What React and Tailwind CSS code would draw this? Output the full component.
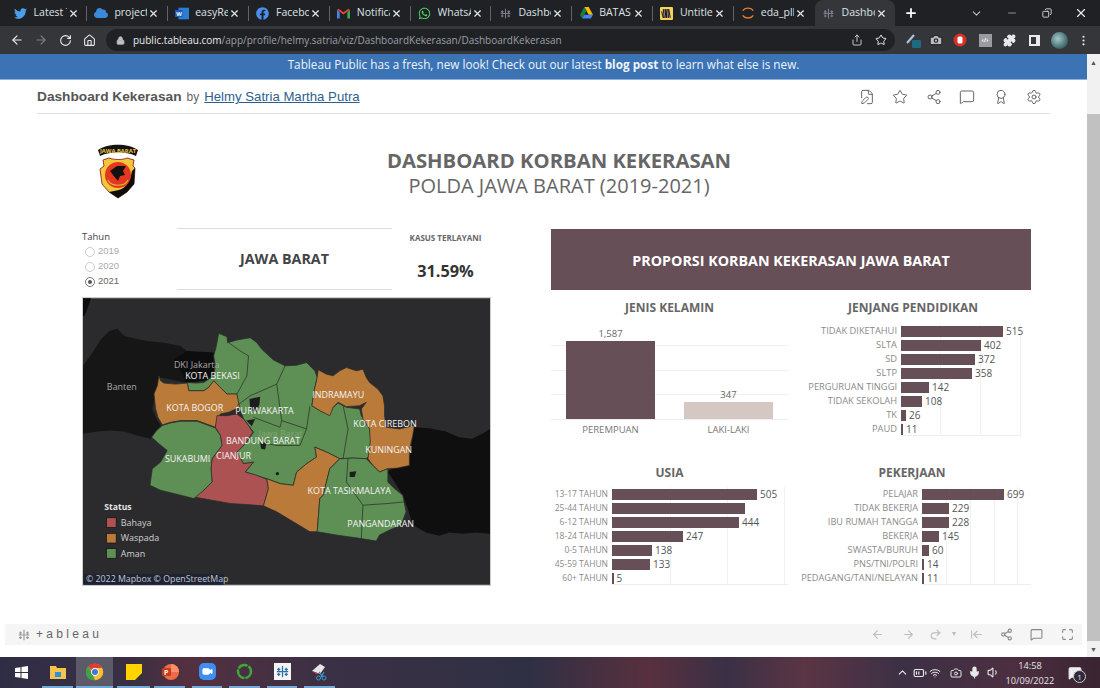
import React from "react";
import { ArrowLeft, ArrowRight, RotateCw, Home, Lock, Share, Star, Camera, Puzzle, X, Plus, ChevronDown, Minus, Copy, MoreVertical, ChevronUp, Share2, MessageSquare, Award, Settings, FileEdit, Mic, Volume1, Wifi, BatteryMedium, MessageSquareText, Undo2, ArrowLeftToLine, Maximize, Video } from "lucide-react";
import { FaTwitter, FaFacebook, FaWhatsapp, FaCloud } from "react-icons/fa";

const T = ({ s = 14, c = "#7a7f8c" }) => (
  <svg width={s} height={s} viewBox="0 0 24 24" stroke={c} strokeWidth="2" fill="none">
    <path d="M12 3v18M3 12h18M6 6v5M3.500 8.500h5M18 6v5M15.500 8.500h5M6 14v5M3.500 16.500h5M18 14v5M15.500 16.500h5" />
  </svg>
);
const Tab = ({ icon, label, active, divider = true }) => (
  <div className={`w-[80.8px] h-[26px] flex items-center shrink-0 relative ${active ? "bg-[#35363a] rounded-t-lg" : ""}`}>
    <span className="w-[16px] ml-[6px] flex justify-center shrink-0">{icon}</span>
    <span className="ml-[5px] w-[33px] overflow-hidden whitespace-nowrap text-[10.500px] text-[#dfe1e5]">{label}</span>
    <X size={11} color="#e8eaed" strokeWidth={2.5} className="ml-[1px]" />
    {divider && <span className="absolute right-0 top-[6px] h-[15px] w-px bg-[#5f6368]" />}
  </div>
);
const Gmail = () => (
  <svg width="13" height="11" viewBox="0 0 24 18">
    <path d="M0 2v16h5V7z" fill="#4285f4" /><path d="M24 2v16h-5V7z" fill="#34a853" />
    <path d="M0 2l12 9 12-9-3-2-9 6.500L3 0z" fill="#ea4335" />
  </svg>
);
const Drive = () => (
  <svg width="13" height="12" viewBox="0 0 24 22">
    <path d="M8 0h8l8 14h-8z" fill="#fbbc04" /><path d="M8 0L0 14l4 7 8-14z" fill="#188038" /><path d="M4 21h16l4-7H8z" fill="#4285f4" />
  </svg>
);
const Word = () => (
  <svg width="14" height="13" viewBox="0 0 24 22">
    <rect x="6" y="1" width="18" height="20" fill="#2b7cd3" /><rect x="0" y="5" width="13" height="12" fill="#185abd" />
    <text x="2" y="15" fontSize="10" fontWeight="700" fill="#fff" fontFamily="Open Sans">W</text>
  </svg>
);
const Miro = () => (
  <svg width="13" height="13" viewBox="0 0 24 24">
    <rect width="24" height="24" rx="2" fill="#f7d34f" />
    <path d="M6 4l2 16M11 4l2 16M16 4l3 16M3 8l3 12M9 4l2 16M14 4l2 16" stroke="#1a1a40" strokeWidth="2" />
  </svg>
);
const Jupyter = () => (
  <svg width="14" height="14" viewBox="0 0 24 24" fill="none" stroke="#e67e32" strokeWidth="2.200">
    <path d="M3 8c4-6 14-6 18 0" /><path d="M3 16c4 6 14 6 18 0" />
  </svg>
);

const tabs = [
  { icon: <FaTwitter size={13} color="#4a9fe8" />, label: "Latest Tw" },
  { icon: <FaCloud size={14} color="#3b8ad9" />, label: "project_" },
  { icon: <Word />, label: "easyRep" },
  { icon: <FaFacebook size={13} color="#4a8ff0" />, label: "Facebook" },
  { icon: <Gmail />, label: "Notificat" },
  { icon: <FaWhatsapp size={13} color="#4fd46a" />, label: "WhatsAp" },
  { icon: <T s={13} />, label: "Dashbo" },
  { icon: <Drive />, label: "BATAS K" },
  { icon: <Miro />, label: "Untitled" },
  { icon: <Jupyter />, label: "eda_plb" },
];

const Poly = ({ c, p }) => <polygon points={p} fill={c} stroke="#2a2d2a" strokeWidth="2.200" strokeLinejoin="round" />;
const green = "#5e8f54";
const orange = "#b97a3a";
const red = "#ad5253";
const labels = [
  ["KOTA BEKASI", 314, 250], ["KOTA BOGOR", 257, 345], ["PURWAKARTA", 465, 355], ["INDRAMAYU", 697, 308],
  ["KOTA CIREBON", 821, 395], ["BANDUNG BARAT", 437, 445], ["CIANJUR", 407, 490], ["SUKABUMI", 253, 500],
  ["KUNINGAN", 857, 472], ["KOTA TASIKMALAYA", 683, 596], ["PANGANDARAN", 803, 695],
];
const lines = [
  "M445 140L480 165L505 180L500 240L470 295",
  "M615 210L590 265L545 285L510 300L470 330",
  "M590 265L605 375L600 395L520 365",
  "M605 375L680 400L690 332",
  "M680 400L660 450L590 450L540 440",
  "M790 330L805 400L790 490",
  "M805 490L800 560L850 630L845 730",
  "M850 630L925 625L975 620",
];
const Map = () => (
  <svg viewBox="6 6 1227 864" className="w-full h-full block" fontFamily="'Open Sans', sans-serif">
    <rect x="6" y="6" width="1227" height="864" fill="#2b2b2d" />
    <polygon points="6,6 30,6 22,30 10,60 6,60" fill="#0c0c0c" />
    <polygon points="6,210 20,190 35,170 60,130 85,105 110,98 130,120 165,128 200,135 250,140 300,150 330,175 400,200 400,250 320,262 240,245 225,290 215,340 228,370 240,390 210,430 170,420 130,408 90,405 50,408 6,415" fill="#161616" />
    <polygon points="280,190 320,165 400,170 400,250 320,262" fill="#0d0d0d" />
    <polygon points="1005,395 1050,398 1100,408 1140,425 1180,430 1210,415 1233,400 1233,716 1190,712 1150,716 1110,712 1080,722 1040,712 1000,690 985,640 970,600 945,560 925,530 990,480" fill="#0f0f0f" />
    <Poly c={green} p="415,112 440,122 442,140 470,132 510,125 530,140 545,160 580,192 615,210 650,208 680,200 705,225 712,245 704,280 696,330 720,345 748,358 760,335 775,322 800,335 840,340 845,360 870,400 875,440 870,480 860,490 820,488 780,490 745,472 705,455 710,485 680,505 650,530 640,570 600,565 560,550 495,530 520,500 490,505 470,470 495,445 520,410 505,390 490,370 475,330 470,295 440,295 420,275 400,255 385,275 370,285 325,285 320,260 345,262 370,260 400,240 405,210 400,180 408,150" />
    <Poly c={orange} p="235,240 240,255 250,262 285,265 320,262 325,285 370,285 385,275 400,255 420,275 440,295 470,295 478,335 445,350 420,355 410,375 405,395 350,375 300,375 270,380 245,388 232,365 225,340 220,295 230,270" />
    <Poly c={red} p="410,360 440,360 470,355 490,370 505,390 518,410 495,445 470,470 490,505 520,500 495,530 530,540 560,552 565,580 550,632 500,628 450,625 395,615 340,605 370,585 395,560 392,520 395,490 425,450 420,420 405,395" />
    <Poly c={green} p="245,390 270,382 300,377 350,377 405,397 420,420 425,450 395,490 392,520 395,560 370,585 340,610 280,595 240,585 208,570 212,540 215,520 240,500 260,465 235,445 213,425 228,405" />
    <Poly c={orange} p="715,222 740,235 760,240 780,225 800,215 830,225 850,220 860,245 870,260 895,280 910,300 915,330 915,360 920,395 960,400 1005,390 1000,420 992,455 990,480 990,510 955,518 925,520 900,530 880,510 865,490 872,440 870,400 850,370 845,340 860,320 840,330 800,333 775,320 760,335 750,360 720,345 696,330 704,280 712,245" />
    <Poly c={orange} p="705,455 745,472 780,490 750,520 730,600 720,610 716,660 712,710 690,710 640,680 590,650 550,632 565,580 560,550 600,565 640,570 650,530 680,505 710,485" />
    <Poly c={green} p="780,490 820,488 860,490 880,510 900,530 925,520 925,560 945,580 970,600 980,650 965,690 930,705 900,720 890,738 840,730 770,720 712,710 716,660 720,610 730,600 750,520" />
    {lines.map((d) => <path key={d} d={d} fill="none" stroke="#2a2d2a" strokeWidth="2.200" />)}
    <polygon points="508,310 540,303 538,325 530,350 510,340" fill="#1d1d1d" />
    <polygon points="498,375 525,370 515,392" fill="#1d1d1d" />
    <polygon points="540,442 560,440 555,462 543,460" fill="#1d1d1d" />
    <polygon points="810,530 830,528 825,545 810,545" fill="#1d1d1d" />
    <circle cx="592" cy="535" r="5" fill="#1d1d1d" />
    <text x="280" y="215" fontSize="27" fill="#a8a8a8">DKI Jakarta</text>
    <text x="78" y="282" fontSize="27" fill="#a8a8a8">Banten</text>
    <text x="535" y="425" fontSize="27" fill="#84a67a">Jawa Barat</text>
    {labels.map(([t, x, y]) => <text key={t} x={x} y={y} fontSize="27" fill="#f4f4f4">{t}</text>)}
    <text x="70" y="646" fontSize="26" fontWeight="700" fill="#e6e6e6">Status</text>
    {[[668, red, "Bahaya"], [715, orange, "Waspada"], [761, green, "Aman"]].map(([y, c, t]) => (
      <g key={t}>
        <rect x="77" y={y} width="29" height="29" fill={c} stroke="#111" strokeWidth="2" />
        <text x="120" y={y + 24} fontSize="27" fill="#d0d0d0">{t}</text>
      </g>
    ))}
    <rect x="8" y="838" width="422" height="32" fill="#1d2335" />
    <text x="15" y="862" fontSize="26.500" fill="#c4c6cc">© 2022 Mapbox  © OpenStreetMap</text>
  </svg>
);

const Logo = () => (
  <svg width="42" height="56" viewBox="0 0 42 56">
    <path d="M1 7C11 0 31 0 41 7L39 13C28 8 14 8 3 13Z" fill="#141414" />
    <text x="21" y="9.500" textAnchor="middle" fontSize="5.800" fontWeight="700" fill="#f0c93a" fontFamily="'Open Sans',sans-serif">JAWA BARAT</text>
    <path d="M6 17L12 15C17 17 26 17 30 15L37 17L36 23L38 25L37 41L30 49L21 55L12 49L5 41L3 26L7 23Z" fill="#f5c53c" stroke="#7a1010" strokeWidth="0.800" />
    <path d="M38 25L37 41L30 49L21 55L12 49L17 48C28 47 33 40 35 28Z" fill="#0c0c0c" />
    <circle cx="21" cy="32" r="13" fill="#e5371f" />
    <path d="M13 28L20 23L29 23L26 28L28 32L23 33L21 38L16 32Z" fill="#111" />
    <path d="M11 37C14 44 28 44 31 37" fill="none" stroke="#d8b53a" strokeWidth="1.200" />
  </svg>
);

const HBars = ({ rows, labelW, plotW, ticks, size }) => (
  <div className="flex flex-col relative">
    {ticks.map((t) => <span key={t} className="absolute top-0 bottom-0 w-px bg-[#f0f0f0]" style={{ left: labelW + 4 + t }} />)}
    <span className="absolute bottom-0 right-0 h-px bg-[#eeeeee]" style={{ left: labelW + 4, width: plotW }} />
    {rows.map(([l, v, w]) => (
      <div key={l} className="h-[14px] flex items-center relative">
        <span className="text-right text-[#8a8a8a] whitespace-nowrap shrink-0" style={{ width: labelW, fontSize: size }}>{l}</span>
        <span className="ml-[4px] h-[11px] bg-[#664f57] shrink-0" style={{ width: w }} />
        {v && <span className="ml-[3px] text-[10px] text-[#555555]">{v}</span>}
      </div>
    ))}
  </div>
);

const Title = ({ children, className = "" }) => (
  <div className={`h-[20px] flex items-center justify-center text-[12px] font-bold text-[#666666] ${className}`}>{children}</div>
);

const Taskbtn = ({ w, active, children }) => (
  <div className={`h-full flex items-center justify-center border-b-2 border-[#76a9d8] shrink-0 ${active ? "bg-[#5c5a68]" : ""}`} style={{ width: w }}>{children}</div>
);

export default function App() {
  return (
    <div className="w-[1100px] h-[688px] flex flex-col overflow-hidden bg-white font-['Open_Sans',sans-serif]">
      {/* tab strip */}
      <div className="h-[26px] bg-[#202124] flex items-center pl-[6.600px] shrink-0">
        {tabs.map((t, i) => <Tab key={i} {...t} divider={i !== 9} />)}
        <Tab icon={<T s={13} />} label="Dashbo" active divider={false} />
        <Plus size={14} color="#fff" strokeWidth={3} className="ml-[9px]" />
        <ChevronDown size={13} color="#bdc1c6" className="ml-[52px]" />
        <Minus size={12} color="#8a8d92" className="ml-[23px]" />
        <Copy size={10} color="#e8eaed" className="ml-[24px] -scale-x-100" />
        <X size={14} color="#e8eaed" className="ml-[22px]" />
      </div>
      {/* toolbar */}
      <div className="h-[28px] bg-[#35363a] flex items-center shrink-0 pl-[10px]">
        <ArrowLeft size={14} color="#e8eaed" />
        <ArrowRight size={14} color="#7b7e83" className="ml-[10px]" />
        <RotateCw size={13} color="#e8eaed" className="ml-[11px]" />
        <Home size={13} color="#e8eaed" className="ml-[11px]" />
        <div className="ml-[10px] w-[789px] h-[22px] rounded-full bg-[#202124] flex items-center pl-[10px]">
          <Lock size={9} color="#bdc1c6" fill="#bdc1c6" />
          <span className="ml-[8px] text-[10px] text-[#e8eaed] whitespace-nowrap">public.tableau.com<span className="text-[#9aa0a6]">/app/profile/helmy.satria/viz/DashboardKekerasan/DashboardKekerasan</span></span>
          <Share size={12} color="#c4c7c5" className="ml-auto" />
          <Star size={12} color="#e8eaed" className="ml-[12px] mr-[8px]" />
        </div>
        <svg width="16" height="16" viewBox="0 0 16 16" className="ml-[10px]"><path d="M2 11L9 3" stroke="#a9c6dc" strokeWidth="2" /><rect x="7" y="8" width="9" height="8" rx="1" fill="#1f6a80" /></svg>
        <Camera size={14} color="#2a2a2a" fill="#b9bbbf" className="ml-[8px]" />
        <svg width="14" height="14" viewBox="0 0 14 14" className="ml-[10px]"><circle cx="7" cy="7" r="6.500" fill="#d93025" /><rect x="4.500" y="3.500" width="5" height="7" rx="1.500" fill="#fff" /></svg>
        <div className="ml-[11.500px] w-[13px] h-[13px] bg-[#9a9ca3] flex items-center justify-center text-[6px] font-bold text-white">‹/›</div>
        <Puzzle size={13} color="#e8eaed" fill="#e8eaed" className="ml-[11px]" />
        <div className="ml-[13px] w-[11px] h-[11px] border-2 border-[#e8eaed] border-r-[4px]" />
        <div className="ml-[11px] w-[17px] h-[17px] rounded-full bg-[radial-gradient(circle_at_40%_40%,#a5c8c8,#3a6468_70%)]" />
        <MoreVertical size={13} color="#e8eaed" className="ml-[9px]" />
      </div>
      {/* page */}
      <div className="h-[603px] flex shrink-0">
        <div className="w-[1087px] flex flex-col">
          <div className="h-[26px] bg-[#3b73b5] border-b border-[#8fb0d8] flex items-center justify-center pb-[3px] text-[11.750px] text-[#eef3f9] shrink-0">
            <span>Tableau Public has a fresh, new look! Check out our latest <b>blog post</b> to learn what else is new.</span>
          </div>
          <div className="h-[34px] mx-[37px] border-b border-[#e0e0e0] flex items-center pt-[1px] shrink-0">
            <span className="text-[13.700px] font-bold text-[#555555] font-['Liberation_Sans',sans-serif]">Dashboard Kekerasan</span>
            <span className="ml-[5px] text-[12px] text-[#666666] font-['Liberation_Sans',sans-serif]">by</span>
            <span className="ml-[5px] text-[13.200px] text-[#2d5f8e] underline font-['Liberation_Sans',sans-serif]">Helmy Satria Martha Putra</span>
            <div className="ml-auto flex items-center gap-[17.500px] mr-[8px] text-[#666666]">
              <FileEdit size={16} strokeWidth={1.5} /><Star size={16} strokeWidth={1.5} /><Share2 size={16} strokeWidth={1.5} /><MessageSquare size={16} strokeWidth={1.5} /><Award size={16} strokeWidth={1.5} /><Settings size={16} strokeWidth={1.5} />
            </div>
          </div>
          {/* header */}
          <div className="h-[114px] flex shrink-0">
            <div className="ml-[97px] mt-[29px] w-[42px] shrink-0"><Logo /></div>
            <div className="w-[560px] ml-[40px] pl-[200px] pt-[32px] flex flex-col items-center shrink-0">
              <div className="text-[20.300px] leading-[28px] font-bold text-[#666666] whitespace-nowrap">DASHBOARD KORBAN KEKERASAN</div>
              <div className="text-[20px] leading-[23px] text-[#666666] whitespace-nowrap">POLDA JAWA BARAT (2019-2021)</div>
            </div>
          </div>
          {/* body */}
          <div className="flex pl-[82px] shrink-0">
            <div className="w-[409px] shrink-0">
              <div className="h-[69px] flex">
                <div className="w-[95px] shrink-0">
                  <div className="text-[9.500px] leading-[15px] text-[#444] mt-[1px]">Tahun</div>
                  {[["2019", 0], ["2020", 0], ["2021", 1]].map(([y, on]) => (
                    <div key={y} className="h-[15px] flex items-center pl-[3px]">
                      <span className={`w-[10px] h-[10px] rounded-full border flex items-center justify-center ${on ? "border-[#777]" : "border-[#cccccc]"}`}>
                        {on ? <span className="w-[4px] h-[4px] rounded-full bg-[#555]" /> : null}
                      </span>
                      <span className={`ml-[3px] text-[9.500px] font-['Liberation_Sans',sans-serif] ${on ? "text-[#666]" : "text-[#aaaaaa]"}`}>{y}</span>
                    </div>
                  ))}
                </div>
                <div className="w-[215px] h-[62px] border-y border-[#dddddd] flex items-center justify-center text-[14.300px] font-bold text-[#444444] shrink-0">JAWA BARAT</div>
                <div className="flex-1 flex flex-col items-center pl-[8px]">
                  <div className="text-[8px] leading-[20px] font-bold text-[#666666] whitespace-nowrap">KASUS TERLAYANI</div>
                  <div className="mt-[11px] text-[16.300px] font-bold text-[#333333]">31.59%</div>
                </div>
              </div>
              <div className="h-[289px] border border-[#cccccc]"><Map /></div>
            </div>
            <div className="w-[480px] ml-[60px] shrink-0">
              <div className="mt-[1px] h-[61px] bg-[#664f57] flex items-center justify-center pt-[3px] text-[14.300px] font-bold text-white">PROPORSI KORBAN KEKERASAN JAWA BARAT</div>
              <div className="flex mt-[8px]">
                <div className="w-[237px] shrink-0">
                  <Title>JENIS KELAMIN</Title>
                  <div className="mt-[6px] h-[112px] relative">
                    <span className="absolute left-0 right-0 top-[21px] h-px bg-[#f0f0f0]" />
                    <span className="absolute left-0 right-0 top-[46px] h-px bg-[#f0f0f0]" />
                    <span className="absolute left-0 right-0 top-[70px] h-px bg-[#f0f0f0]" />
                    <div className="flex pl-[15px] gap-[29px] h-[96px] border-b border-[#eeeeee] relative">
                      <div className="w-[89px] flex flex-col justify-end items-center">
                        <span className="text-[9.500px] leading-[15px] text-[#666]">1,587</span>
                        <span className="w-full h-[78px] bg-[#664f57]" />
                      </div>
                      <div className="w-[89px] flex flex-col justify-end items-center">
                        <span className="text-[9.500px] leading-[15px] text-[#666]">347</span>
                        <span className="w-full h-[17px] bg-[#d5c8c3]" />
                      </div>
                    </div>
                    <div className="flex pl-[15px] gap-[29px] text-[9.500px] leading-[20px] text-[#777] text-center">
                      <span className="w-[89px]">PEREMPUAN</span><span className="w-[89px]">LAKI-LAKI</span>
                    </div>
                  </div>
                  <Title className="mt-[27px]">USIA</Title>
                  <div className="mt-[4px]">
                    <HBars labelW={57} plotW={176} size="8.500px" ticks={[0, 58, 115, 172]} rows={[
                      ["13-17 TAHUN", "505", 145], ["25-44 TAHUN", "", 133], ["6-12 TAHUN", "444", 127], ["18-24 TAHUN", "247", 71],
                      ["0-5 TAHUN", "138", 40], ["45-59 TAHUN", "133", 38], ["60+ TAHUN", "5", 1.5],
                    ]} />
                  </div>
                </div>
                <div className="w-[243px] shrink-0">
                  <Title className="pl-[7px] text-[12.300px]">JENJANG PENDIDIKAN</Title>
                  <div className="mt-[6px]">
                    <HBars labelW={109} plotW={120} size="9.300px" ticks={[0, 39, 79, 119]} rows={[
                      ["TIDAK DIKETAHUI", "515", 102], ["SLTA", "402", 80], ["SD", "372", 74], ["SLTP", "358", 71],
                      ["PERGURUAN TINGGI", "142", 28], ["TIDAK SEKOLAH", "108", 21], ["TK", "26", 5], ["PAUD", "11", 2],
                    ]} />
                  </div>
                  <Title className="mt-[27px] pl-[5px]">PEKERJAAN</Title>
                  <div className="mt-[4px]">
                    <HBars labelW={130} plotW={109} size="9.200px" ticks={[0, 24, 48, 72, 95]} rows={[
                      ["PELAJAR", "699", 82], ["TIDAK BEKERJA", "229", 27], ["IBU RUMAH TANGGA", "228", 27], ["BEKERJA", "145", 17],
                      ["SWASTA/BURUH", "60", 7], ["PNS/TNI/POLRI", "14", 2], ["PEDAGANG/TANI/NELAYAN", "11", 2],
                    ]} />
                  </div>
                </div>
              </div>
            </div>
          </div>
          {/* footer */}
          <div className="mt-[38px] ml-[5px] w-[1077px] h-[21px] bg-[#f5f5f5] flex items-center shrink-0 pl-[12px]">
            <T s={14} c="#999999" />
            <span className="ml-[5px] text-[12px] leading-[16px] mb-[2px] text-[#666666] tracking-[3.300px] font-['Liberation_Sans',sans-serif]">+ableau</span>
            <div className="ml-auto flex items-center text-[#bdbdbd] pr-[8.500px]">
              <ArrowLeft size={13} />
              <ArrowRight size={13} className="ml-[18px]" />
              <Undo2 size={13} className="ml-[14px] -scale-x-100" />
              <span className="ml-[9px] text-[7px]">▼</span>
              <ArrowLeftToLine size={13} className="ml-[12px]" />
              <Share2 size={13} color="#888" className="ml-[17px]" />
              <MessageSquare size={13} color="#888" className="ml-[17px]" />
              <Maximize size={13} color="#888" className="ml-[18px]" />
            </div>
          </div>
        </div>
        {/* scrollbar */}
        <div className="w-[13px] bg-[#f1f1f1] flex flex-col items-center shrink-0">
          <span className="mt-[4px] text-[7px] leading-[10px] text-[#555]">▲</span>
          <div className="mt-[46px] w-full h-[527px] bg-[#c1c1c1]" />
          <span className="mt-[4px] text-[7px] leading-[10px] text-[#555]">▼</span>
        </div>
      </div>
      {/* taskbar */}
      <div className="h-[31px] flex items-center shrink-0 bg-[linear-gradient(90deg,#2f2d45_0%,#3a2f42_12%,#53303f_17%,#3b3045_30%,#2f3044_48%,#58303e_59%,#3a3045_66%,#5a3544_73%,#3c3045_82%,#4c2f40_92%,#3a2432_100%)]">
        <div className="w-[42px] flex justify-center shrink-0">
          <svg width="13" height="13" viewBox="0 0 13 13" fill="#fff"><path d="M0 2l5.500-.8V6H0zM6.500 1L13 0v6H6.500zM0 7h5.500v4.800L0 11zM6.500 7H13v6l-6.500-1z" /></svg>
        </div>
        <Taskbtn w={31}><svg width="16" height="14" viewBox="0 0 16 14"><path d="M0 1h6l1 2h9v11H0z" fill="#f4c24d" /><rect x="5" y="7" width="6" height="5" fill="#2f8fd8" /></svg></Taskbtn>
        <div className="w-[3px]" />
        <Taskbtn w={37} active>
          <svg width="18" height="18" viewBox="0 0 24 24"><circle cx="12" cy="12" r="11" fill="#fbc02d" /><path d="M12 1a11 11 0 0 1 9.500 5.500H12a5.500 5.500 0 0 0-5 3L3 4a11 11 0 0 1 9-3z" fill="#e53935" /><path d="M3 4l5 9 4 10A11 11 0 0 1 3 4z" fill="#43a047" /><circle cx="12" cy="12" r="5" fill="#fff" /><circle cx="12" cy="12" r="4" fill="#3b78e7" /></svg>
        </Taskbtn>
        <div className="w-[4px]" />
        <Taskbtn w={33}><svg width="16" height="16" viewBox="0 0 16 16"><path d="M0 0h16v10l-6 6H0z" fill="#ffd400" /><path d="M16 9v7H9z" fill="#333" /></svg></Taskbtn>
        <div className="w-[4px]" />
        <Taskbtn w={31}><svg width="18" height="18" viewBox="0 0 18 18"><circle cx="10" cy="9" r="8" fill="#ed6c47" /><path d="M10 9V1a8 8 0 0 1 8 8z" fill="#ff8f6b" /><rect x="1" y="5" width="9" height="8" rx="1" fill="#c43e1c" /><text x="3" y="12" fontSize="7" fontWeight="700" fill="#fff" fontFamily="Open Sans">P</text></svg></Taskbtn>
        <div className="w-[7px]" />
        <Taskbtn w={30}><div className="w-[17px] h-[17px] rounded-[5px] bg-[#3f8cf3] flex items-center justify-center"><Video size={11} color="#fff" fill="#fff" /></div></Taskbtn>
        <div className="w-[7px]" />
        <Taskbtn w={31}><svg width="17" height="17" viewBox="0 0 17 17"><circle cx="8.500" cy="8.500" r="6.500" fill="none" stroke="#3fa83a" strokeWidth="2.500" strokeDasharray="9 1 12 1 10 1" /></svg></Taskbtn>
        <div className="w-[7px]" />
        <Taskbtn w={30}><div className="w-[17px] h-[17px] bg-[#f4f4f4] flex items-center justify-center"><T s={15} c="#2f6ea8" /></div></Taskbtn>
        <div className="w-[7px]" />
        <Taskbtn w={31}><svg width="17" height="18" viewBox="0 0 17 18"><path d="M1 8L9 1l5 3-5 7z" fill="#e6e6e6" /><path d="M1 8l4 3 4 0z" fill="#c43b3b" /><path d="M8 9l4 5M13 9l-3 5" stroke="#3a96c8" strokeWidth="1.300" /><circle cx="7.500" cy="15" r="2" fill="none" stroke="#3a96c8" /><circle cx="13" cy="15" r="2" fill="none" stroke="#3a96c8" /></svg></Taskbtn>
        <div className="ml-auto flex items-center text-[#e8e8e8]">
          <ChevronUp size={13} />
          <BatteryMedium size={14} className="ml-[4.500px]" />
          <Wifi size={12} className="ml-[2px]" />
          <Camera size={12} className="ml-[9px]" />
          <Mic size={13} fill="#e8e8e8" className="ml-[5.500px]" />
          <Volume1 size={13} className="ml-[6px]" />
          <div className="ml-[4.500px] w-[52px] flex flex-col items-center text-[9.200px] leading-[15px] text-[#e4e4e4]">
            <span>14:58</span><span>10/09/2022</span>
          </div>
          <div className="ml-[12px] mr-[18px] relative">
            <MessageSquareText size={14} fill="#f0f0f0" />
            <span className="absolute left-[5px] top-[4px] w-[13px] h-[13px] rounded-full bg-[#2f2a3c] border border-[#ccc] text-[8px] leading-[11px] text-center">1</span>
          </div>
        </div>
      </div>
    </div>
  );
}
